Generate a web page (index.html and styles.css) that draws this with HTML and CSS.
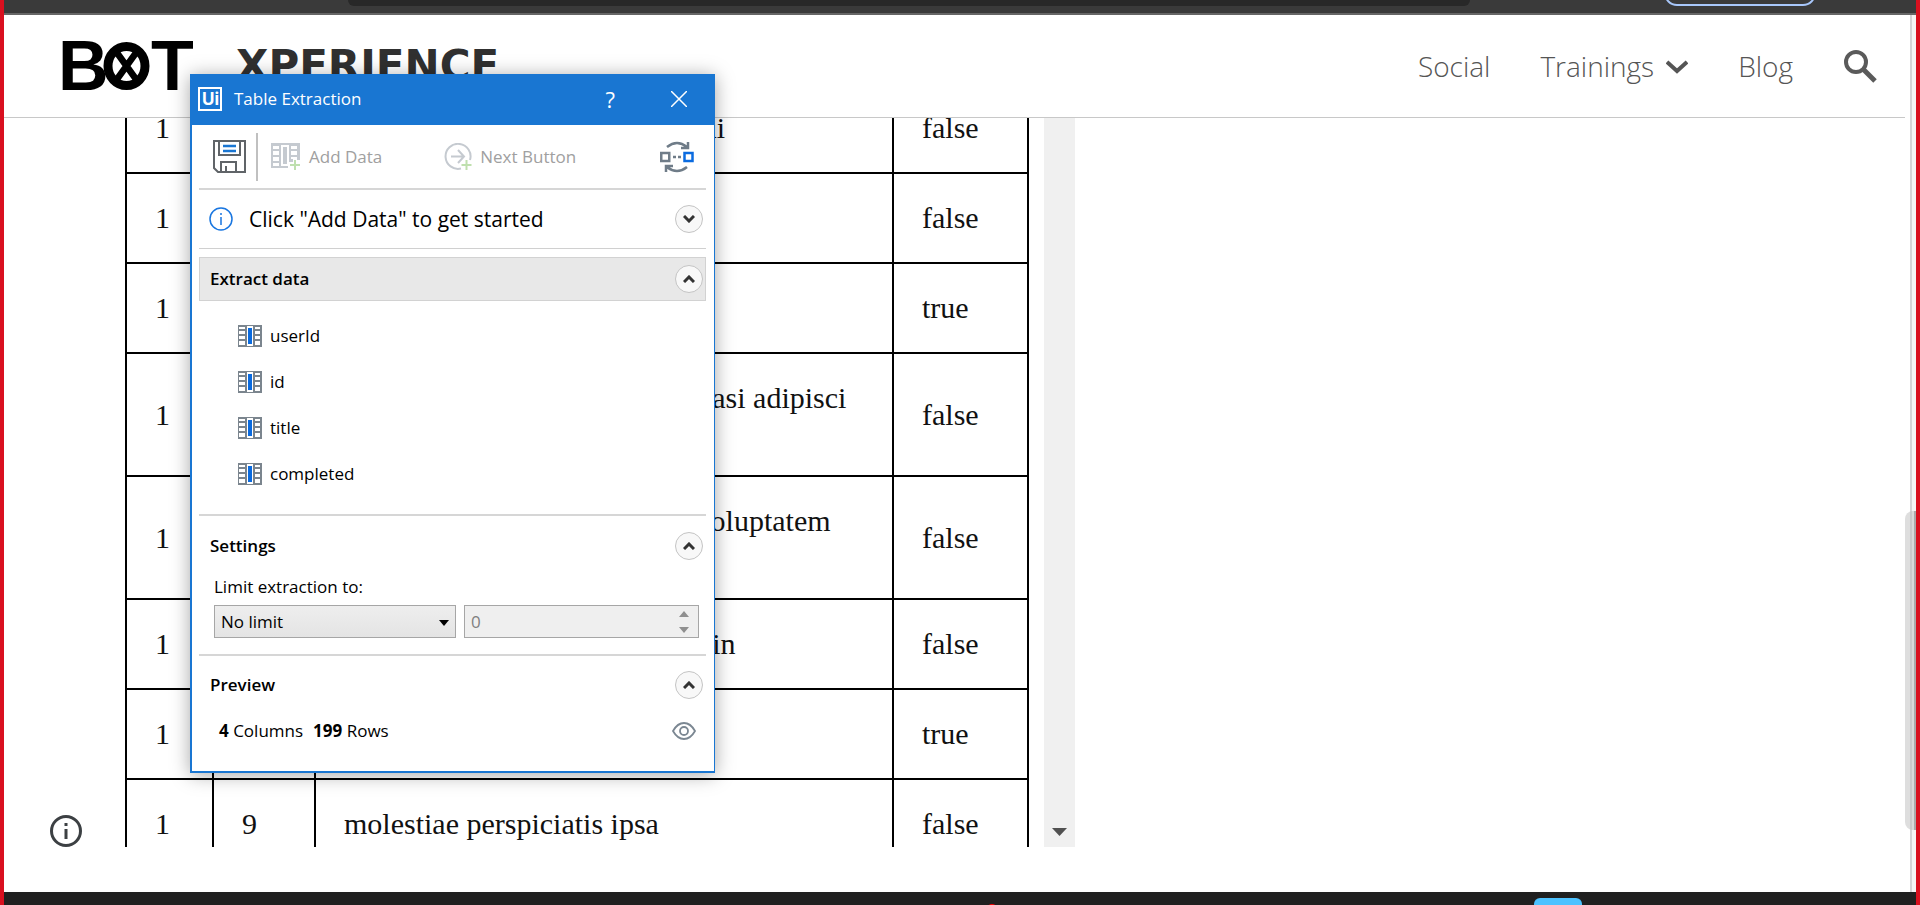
FILE: index.html
```html
<!DOCTYPE html>
<html lang="en">
<head>
<meta charset="utf-8">
<title>Bot Xperience</title>
<link rel="stylesheet" href="styles.css">
</head>
<body>
<svg class="defs" aria-hidden="true">
  <symbol id="column" viewBox="0 0 24 22">
    <rect width="24" height="22" fill="#7b858e"/>
    <path d="M1 2h6v2H1zM1 6h6v3H1zM1 11h6v3H1zM1 16h6v4H1zM17 2h5v2h-5zM17 6h5v3h-5zM17 11h5v3h-5zM17 16h5v4h-5zM9 1h6v20H9z" fill="#fff"/>
    <rect x="10" y="3" width="4" height="16" fill="#0a6be0"/>
  </symbol>
  <symbol id="chevron" viewBox="0 0 12 8">
    <path d="M1 7l5-5 5 5" fill="none" stroke="#333" stroke-width="3"/>
  </symbol>
</svg>
<div class="page">
  <div class="browser-bar">
    <div class="address"></div>
    <div class="profile"></div>
  </div>
  <header class="site-header">
    <a class="brand" href="#" aria-label="Bot Xperience home">
      <svg class="logo" viewBox="0 0 132 52" role="img" aria-label="BOT">
        <text class="logo-letter" x="-3" y="50">B</text>
        <text class="logo-letter" x="90" y="50">T</text>
        <ellipse cx="65.500" cy="26" rx="18.500" ry="19.500" fill="none" stroke="#000" stroke-width="9"/>
        <path d="M54 10l23 32M77 10L54 42" stroke="#000" stroke-width="6.500"/>
      </svg>
      <span class="brand-name">XPERIENCE</span>
    </a>
    <nav class="nav">
      <a href="#">Social</a>
      <a href="#" class="nav-drop">Trainings
        <svg width="22" height="16" viewBox="0 0 22 16"><path d="M1 4l10 9 10-9" fill="none" stroke="#555" stroke-width="4"/></svg>
      </a>
      <a href="#">Blog</a>
      <button class="search" aria-label="Search">
        <svg width="34" height="34" viewBox="0 0 34 34" fill="none" stroke="#5a5a5a" stroke-width="4"><circle cx="13" cy="13" r="10"/><path d="M20 20l12 12" stroke-width="5"/></svg>
      </button>
    </nav>
  </header>
  <main class="main">
    <aside class="gutter">
      <button class="info" aria-label="Page information">
        <svg width="32" height="32" viewBox="0 0 32 32"><circle cx="16" cy="16" r="14.500" fill="none" stroke="#3c4043" stroke-width="3"/><path d="M16 14v10M16 8v3" stroke="#3c4043" stroke-width="3"/></svg>
      </button>
    </aside>
    <div class="table-view">
      <table class="todos">
        <colgroup><col class="c-user"><col class="c-id"><col class="c-title"><col class="c-done"></colgroup>
        <tbody>
          <tr><td>1</td><td>2</td><td>quis ut nam facilis et officia qui</td><td>false</td></tr>
          <tr><td>1</td><td>3</td><td>fugiat veniam minus</td><td>false</td></tr>
          <tr><td>1</td><td>4</td><td>et porro tempora</td><td>true</td></tr>
          <tr><td>1</td><td>5</td><td>laboriosam mollitia et enim quasi adipisci quia provident illum</td><td>false</td></tr>
          <tr><td>1</td><td>6</td><td>qui ullam ratione quibusdam voluptatem quia omnis</td><td>false</td></tr>
          <tr><td>1</td><td>7</td><td>illo expedita consequatur quia in</td><td>false</td></tr>
          <tr><td>1</td><td>8</td><td>quo adipisci enim quam ut ab</td><td>true</td></tr>
          <tr><td>1</td><td>9</td><td>molestiae perspiciatis ipsa</td><td>false</td></tr>
        </tbody>
      </table>
    </div>
    <div class="inner-scroll">
      <button aria-label="Scroll down"><svg width="15" height="8" viewBox="0 0 15 8"><path d="M0 0h15L7.500 8z" fill="#505050"/></svg></button>
    </div>
  </main>
  <footer class="taskbar"><span class="dot"></span><span class="app"></span></footer>
  <div class="page-scroll"><div class="thumb"></div></div>
</div>

<section class="dialog" role="dialog" aria-label="Table Extraction">
  <header class="titlebar">
    <svg class="ui-logo" width="24" height="24" viewBox="0 0 24 24"><rect x="1" y="1" width="22" height="22" fill="none" stroke="#fff" stroke-width="2"/><text x="4" y="18">Ui</text></svg>
    <h1>Table Extraction</h1>
    <button class="help" aria-label="Help">?</button>
    <button class="close" aria-label="Close"><svg width="16" height="16" viewBox="0 0 16 16"><path d="M0 0l16 16M16 0L0 16" stroke="#fff" stroke-width="1.500"/></svg></button>
  </header>
  <div class="content">
    <div class="toolbar">
      <button class="save" aria-label="Save">
        <svg width="33" height="33" viewBox="0 0 33 33" fill="none" stroke="#606468" stroke-width="2"><path d="M1 1h31v31H5l-4-4z"/><path d="M6 1v14h21V1M8 32V22h15v10"/><path d="M13 26v6"/><path d="M10 6h13M10 11h13" stroke="#1976d2" stroke-width="2.500"/></svg>
      </button>
      <button class="tool tool-add" disabled>
        <svg width="30" height="28" viewBox="0 0 30 28"><path d="M0 0h29v17h-3v-3h-4v5h-5v6H0z" fill="#c5cad0"/><path d="M2 3h6v3H2zM2 8h6v4H2zM2 14h6v4H2zM2 20h6v3H2zM20 3h6v3h-6zM20 8h6v4h-6zM20 14h6v2h-6zM10 2h8v21h-8z" fill="#fff"/><path d="M12 4h4v17h-4z" fill="#c5cad0"/><path d="M24 17v10M19 22h10" stroke="#bfe0ae" stroke-width="2"/></svg>
        Add Data
      </button>
      <button class="tool" disabled>
        <svg width="28" height="28" viewBox="0 0 28 28" fill="none" stroke="#c5cad0" stroke-width="2"><path d="M17 25.500A12.500 12.500 0 1 1 26 17"/><path d="M7 13.500h12M14 7l6 6.500-6 6.500"/><path d="M22.500 17v10M17.500 22h10" stroke="#bfe0ae"/></svg>
        Next Button
      </button>
      <button class="refresh" aria-label="Refresh columns">
        <svg width="34" height="32" viewBox="0 0 34 32" fill="none" stroke="#6f7c88" stroke-width="2.500"><path d="M7 6q10-8 20 0M28 1v6h-7M27 26q-10 8-20 0M6 31v-6h7"/><rect x="1.250" y="12" width="8" height="8"/><rect x="24.500" y="12" width="8" height="8" stroke="#0a6be0"/><path d="M13 16h3M18 16h3"/></svg>
      </button>
    </div>
    <div class="hint">
      <svg width="24" height="24" viewBox="0 0 24 24" fill="none" stroke="#1976e0" stroke-width="1.500"><circle cx="12" cy="12" r="11"/><path d="M12 10v8M12 6v2"/></svg>
      <strong>Click "Add Data" to get started</strong>
      <button class="toggle" aria-label="Expand hint"><svg class="down" width="12" height="8"><use href="#chevron"/></svg></button>
    </div>
    <div class="extract">
      <h2>Extract data</h2>
      <button class="toggle" aria-label="Collapse extract data"><svg width="12" height="8"><use href="#chevron"/></svg></button>
    </div>
    <ul class="columns">
      <li><svg width="24" height="22"><use href="#column"/></svg>userId</li>
      <li><svg width="24" height="22"><use href="#column"/></svg>id</li>
      <li><svg width="24" height="22"><use href="#column"/></svg>title</li>
      <li><svg width="24" height="22"><use href="#column"/></svg>completed</li>
    </ul>
    <div class="settings">
      <div class="head"><h2>Settings</h2><button class="toggle" aria-label="Collapse settings"><svg width="12" height="8"><use href="#chevron"/></svg></button></div>
      <label for="limit">Limit extraction to:</label>
      <div class="fields">
        <div class="field"><select id="limit"><option>No limit</option></select><svg class="caret" width="10" height="6" viewBox="0 0 10 6"><path d="M0 0h10L5 6z"/></svg></div>
        <div class="field"><input type="text" value="0" aria-label="Row limit" disabled><svg class="spin" width="10" height="22" viewBox="0 0 10 22"><path d="M0 6h10L5 0zM0 16h10l-5 6z" fill="#8f8f8f"/></svg></div>
      </div>
    </div>
    <div class="preview">
      <div class="head"><h2>Preview</h2><button class="toggle" aria-label="Collapse preview"><svg width="12" height="8"><use href="#chevron"/></svg></button></div>
      <div class="summary">
        <span><b>4</b> Columns</span><span><b>199</b> Rows</span>
        <button class="eye" aria-label="Show preview"><svg width="24" height="18" viewBox="0 0 24 18" fill="none" stroke="#7b8792" stroke-width="1.800"><path d="M1 9q4.500-8 11-8t11 8q-4.500 8-11 8T1 9z"/><circle cx="12" cy="9" r="4"/></svg></button>
      </div>
    </div>
  </div>
</section>
</body>
</html>
```
FILE: styles.css
```css
* { box-sizing: border-box; }
body { margin: 0; background: #fff; color: #000; font-family: "Open Sans", "Noto Sans", sans-serif; }
button { padding: 0; border: 0; background: none; color: inherit; font: inherit; display: flex; align-items: center; }
svg { display: block; flex: none; }
h1, h2, ul { margin: 0; padding: 0; }
.defs { display: none; }

.page { position: relative; display: flex; flex-direction: column; height: 100vh; overflow: hidden; border: solid #d9101f; border-width: 0 4px; }
.browser-bar { display: flex; flex: none; height: 15px; padding: 0 100px 0 344px; background: #3a3a3a; border-bottom: 2px solid #666; }
.address { flex: 1; height: 6px; background: #282828; border-radius: 0 0 6px 6px; }
.profile { width: 152px; height: 26px; margin: -20px 0 0 194px; border: 2px solid #a8c7fa; border-radius: 13px; }

.site-header { display: flex; flex: none; align-items: center; justify-content: space-between; height: 103px; margin-right: 11px; padding: 0 28px 0 57px; border-bottom: 1px solid #c8c8c8; }
.brand { display: flex; align-items: center; gap: 43px; color: #303030; text-decoration: none; }
.logo { width: 132px; height: 52px; }
.logo-letter { font: bold 70px "Liberation Sans", sans-serif; fill: #000; }
.brand-name { font: bold 42px/52px "DejaVu Sans", sans-serif; }
.nav { display: flex; align-items: center; gap: 50px; color: #555; font-size: 28px; font-weight: 300; line-height: 36px; }
.nav a { color: inherit; text-decoration: none; }
.nav-drop { display: flex; align-items: center; gap: 12px; }

.main { display: flex; flex: 1; min-height: 0; padding-bottom: 45px; }
.gutter { display: flex; align-items: flex-end; width: 121px; padding-left: 46px; }
.table-view { flex: none; overflow: hidden; }
.todos { width: 904px; margin-top: -36px; table-layout: fixed; border-collapse: collapse; font: 30px/33px "Liberation Serif", serif; color: #111; }
.todos td { padding: 27px 27px 28px 28px; border: 2px solid #000; }
.c-user { width: 87px; }
.c-id { width: 102px; }
.c-done { width: 135px; }
.inner-scroll { display: flex; align-items: flex-end; justify-content: center; width: 31px; margin-left: 15px; padding-bottom: 11px; background: #f0f0f0; }

.taskbar { display: flex; flex: none; height: 13px; padding-left: 982px; background: #202020; overflow: hidden; }
.dot { width: 12px; height: 12px; margin-top: 12px; border-radius: 50%; background: #f00; }
.app { width: 48px; height: 20px; margin: 6px 0 0 536px; border-radius: 6px; background: #4cc2ff; }
.page-scroll { position: absolute; top: 15px; right: 0; bottom: 13px; width: 6px; background: #f5f5f5; border-left: 2px solid #d4d4d6; }
.thumb { position: absolute; top: 496px; right: 0; width: 11px; height: 319px; border-right: 2px solid #aaa; border-radius: 8px 0 0 8px; background: rgba(190, 190, 190, 0.5); }

.dialog { position: absolute; left: 190px; top: 74px; width: 525px; background: #fff; border: solid #1976d2; border-width: 0 1px 2px 2px; box-shadow: 0 2px 18px rgba(0, 0, 0, 0.35); font-size: 17px; line-height: 24px; }
.titlebar { display: flex; align-items: center; height: 51px; padding: 0 27px 2px 6px; background: #1976d2; color: #fff; }
.titlebar h1 { flex: 1; margin-left: 12px; font-size: 17px; font-weight: 400; }
.ui-logo text { font: bold 17px "Inter", sans-serif; fill: #fff; }
.help { margin-right: 56px; font-size: 22px; }
.content { padding: 0 8px 0 7px; }
.toolbar { display: flex; align-items: center; height: 65px; border-bottom: 2px solid #d6d6d6; color: #a0a0a0; }
.save { height: 48px; padding: 0 10px 0 14px; border-right: 2px solid #c0c0c0; }
.tool { gap: 8px; }
.tool-add { margin: 0 62px 0 13px; }
.refresh { margin: 0 12px 0 auto; }
.hint { display: flex; align-items: center; height: 59px; padding: 0 3px 0 10px; border-bottom: 1px solid #d0d0d0; font-size: 21px; }
.hint strong { flex: 1; margin-left: 16px; font-weight: 500; }
.toggle { justify-content: center; width: 28px; height: 28px; border: 1px solid #c4c4c4; border-radius: 50%; background: #f8f8f8; }
.down { transform: rotate(180deg); }
h2 { flex: 1; font-size: 17px; font-weight: 600; }
.extract { display: flex; align-items: center; height: 44px; margin-top: 8px; padding: 0 2px 0 10px; border: 1px solid #d2d2d2; background: #e8e8e8; }
.columns { padding: 12px 0 17px; list-style: none; border-bottom: 2px solid #d6d6d6; }
.columns li { display: flex; align-items: center; gap: 8px; height: 46px; padding-left: 39px; }
.head { display: flex; align-items: center; height: 28px; padding: 0 3px 0 11px; }
.settings { height: 140px; padding-top: 16px; border-bottom: 2px solid #d6d6d6; }
.settings label { display: block; margin: 15px 0 6px 15px; }
.fields { display: grid; grid-template-columns: 242px 1fr; gap: 8px; padding: 0 7px 0 15px; }
.field { position: relative; }
.field select, .field input { display: block; width: 100%; height: 33px; padding: 0 6px; border: 1px solid #a6a6a6; border-radius: 0; appearance: none; background: linear-gradient(#eee, #e4e4e4); color: #000; font: inherit; }
.field input { background: #efefef; color: #808080; }
.caret { position: absolute; right: 7px; top: 15px; }
.spin { position: absolute; right: 10px; top: 6px; }
.preview { height: 115px; padding-top: 15px; }
.summary { display: flex; align-items: center; gap: 10px; height: 24px; margin-top: 20px; padding: 0 10px 0 20px; }
.eye { margin-left: auto; }
```
